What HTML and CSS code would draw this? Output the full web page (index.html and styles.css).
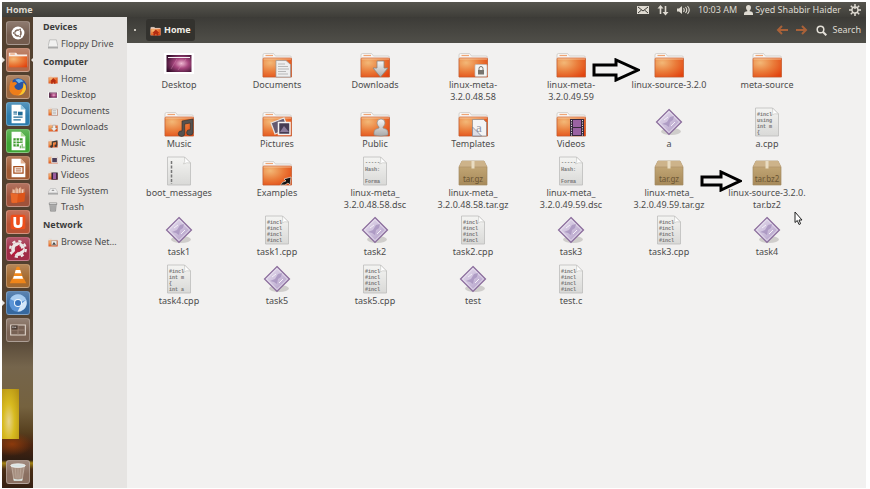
FILE: index.html
```html
<!DOCTYPE html>
<html lang="en">
<head>
<meta charset="utf-8">
<title>Home</title>
<link rel="stylesheet" href="styles.css">
</head>
<body>
<svg class="defs" width="0" height="0" aria-hidden="true">
  <defs>
    <linearGradient id="g-paper" x1="0" y1="0" x2="0" y2="1"><stop offset="0" stop-color="#f4f4f2"/><stop offset="1" stop-color="#d9d9d7"/></linearGradient>
    <radialGradient id="g-folder" cx=".25" cy=".25" r=".95"><stop offset="0" stop-color="#f3b877"/><stop offset=".5" stop-color="#ea7c3a"/><stop offset="1" stop-color="#e2430f"/></radialGradient>
    <linearGradient id="g-box" x1="0" y1="0" x2="0" y2="1"><stop offset="0" stop-color="#c9ad7c"/><stop offset="1" stop-color="#a78a5a"/></linearGradient>
    <linearGradient id="g-gem" x1="0" y1="0" x2="1" y2="1"><stop offset="0" stop-color="#e9e2ef"/><stop offset=".5" stop-color="#cdbfdc"/><stop offset="1" stop-color="#a892bf"/></linearGradient>
    <radialGradient id="g-desk" cx=".6" cy=".5" r=".7"><stop offset="0" stop-color="#f0b9d2"/><stop offset=".4" stop-color="#a8477f"/><stop offset="1" stop-color="#2f0a26"/></radialGradient>
    <linearGradient id="g-metal" x1="0" y1="0" x2="0" y2="1"><stop offset="0" stop-color="#f6f6f6"/><stop offset="1" stop-color="#aaa"/></linearGradient>
    <symbol id="folder" viewBox="0 0 32 30">
      <path d="M2 29V7q0-1.500 1.500-1.500h9l2 2.500H29q1.500 0 1.500 1.500V29z" fill="#f8f7f6" stroke="#c9c4bf" stroke-width=".7"/>
      <path d="M4.500 7.500h7.500" stroke="#efa473" stroke-width="1.200"/>
      <path d="M2 11q0-1 1-1h26.500q1 0 1 1v18H2z" fill="url(#g-folder)" stroke="#c85a2b" stroke-width=".7"/>
      <path d="M2.500 11h27.500" stroke="#f8cfa8" stroke-width=".8"/>
    </symbol>
    <symbol id="paper" viewBox="0 0 32 30">
      <path d="M4.500 1h17l6 6v22h-23z" fill="url(#g-paper)" stroke="#bdbdbb" stroke-width=".8"/>
      <path d="M21.500 1q1 5-1 7 3-2 7-1z" fill="#fff" stroke="#bdbdbb" stroke-width=".6"/>
    </symbol>
    <symbol id="gem" viewBox="0 0 32 30">
      <ellipse cx="18" cy="24.500" rx="10" ry="3.500" fill="#cfcdcb"/>
      <path d="M16 2.500 28.500 15 16 27.500 3.500 15z" fill="url(#g-gem)" stroke="#8a6c9b" stroke-width="1.200"/>
      <path d="M16 4.500 26.500 15 16 25.500 5.500 15z" fill="none" stroke="#eee8f2" stroke-width=".8"/>
      <path d="m9 17 5-2 3-5 4-1-1 4-3 2-1 5-3-2z" fill="#9a83b4" opacity=".6"/>
      <path d="m11 13 4-3M18 19l4-4" stroke="#f3eff7"/>
    </symbol>
    <symbol id="box" viewBox="0 0 32 30">
      <path d="M5 5h22l3 6v18H2V11z" fill="url(#g-box)" stroke="#a58b61" stroke-width=".7"/>
      <path d="M5 5h22l3 6H2z" fill="#cdb38a"/>
      <path d="M2 11h28" stroke="#b09467" stroke-width=".7"/>
      <path d="M14.500 5h3v7.500h-3z" fill="#e9dcc2"/>
    </symbol>
    <symbol id="desktop" viewBox="0 0 32 30">
      <path d="M1 5h30v21H1z" fill="#fff"/><path d="M3.500 7h25v17h-25z" fill="url(#g-desk)"/>
      <path d="M5 9.500h22" stroke="#f8edf3"/><path d="m8 21 6-10M15 22l8-11" stroke="#d995b8" stroke-width=".6" opacity=".6"/>
    </symbol>
    <symbol id="e-doc" viewBox="0 0 32 30"><path d="M15 12.500h10l4.500 4V29H15z" fill="#eee" stroke="#999" stroke-width=".7"/><path d="M17 16h7M17 18.500h10M17 21h11M17 23.500h8M17 26h10" stroke="#aaa" stroke-width=".8"/></symbol>
    <symbol id="e-down" viewBox="0 0 32 30"><path d="M18 13h7v7h4l-7.500 9L14 20h4z" fill="url(#g-metal)" stroke="#8c8680" stroke-width=".8"/></symbol>
    <symbol id="e-music" viewBox="0 0 32 30"><path d="m19 14 11-2v13.500a3.200 2.800 0 1 1-2.700-2.800V16l-5.600 1v9.700a3.200 2.800 0 1 1-2.700-2.800z" fill="#555250" stroke="#2f2d2b" stroke-width=".6"/></symbol>
    <symbol id="e-pics" viewBox="0 0 32 30"><path d="m10 16 13-5 4 11-13 5z" fill="#655b70" stroke="#e8e4e0" stroke-width="1.300"/><path d="M17.500 15.500h11.500v12H17.500z" fill="#463c53" stroke="#f5f3f1" stroke-width="1.500"/><path d="m19 25 4-6 5 6" fill="#8b7c9b"/></symbol>
    <symbol id="e-user" viewBox="0 0 32 30"><path d="M22 12q4 0 4 4 0 2-2 4v1q5 1 5 4v3q-7 2-14 0v-3q0-3 5-4v-1q-2-2-2-4 0-4 4-4z" fill="url(#g-metal)" stroke="#918c88" stroke-width=".7"/></symbol>
    <symbol id="e-lock" viewBox="0 0 32 30"><rect x="18" y="16.500" width="12" height="12" rx="1" fill="#f5f5f4" stroke="#bbb" stroke-width=".7"/><path d="M21 22h6v4.500h-6z" fill="#77746f"/><path d="M22 22v-1.500q0-2 2-2t2 2V22" fill="none" stroke="#77746f"/></symbol>
    <symbol id="e-tmpl" viewBox="0 0 32 30"><path d="M15.500 12.500h11l3 3V29h-14z" fill="#f4f4f5" stroke="#888" stroke-width=".7"/><text x="19" y="25" font-family="Liberation Serif,serif" font-size="13" fill="#8f91a0">a</text><path d="m15.500 20 9 9h-9z" fill="#dcdde5" stroke="#7b7c8c" stroke-width=".7"/></symbol>
    <symbol id="e-video" viewBox="0 0 32 30"><path d="M15 12h14v17H15z" fill="#38283d"/><path d="M18 13h8v7h-8zM18 21h8v7h-8z" fill="#9a62a3"/><path d="M16.500 13v16M27.500 13v16" stroke="#ddd" stroke-dasharray="1.200 1.200"/></symbol>
    <symbol id="e-link" viewBox="0 0 32 30"><path d="m30 21-1 8-2-2-3 2h-3l-2 1q2-5 6-5l-2-2z" fill="#111" stroke="#f4dfcf" stroke-width=".7"/></symbol>
  </defs>
</svg>

<div class="desktop">
  <header class="panel">
    <h1 class="panel-title">Home</h1>
    <div class="indicators">
      <svg width="12" height="10" viewBox="0 0 12 10"><path d="M0 1h12v8H0z" fill="#dfdbd2"/><path d="m1 2 5 4 5-4M1 8l3.500-3M11 8 7.500 5" fill="none" stroke="#3f3e39"/></svg>
      <svg width="12" height="12" viewBox="0 0 12 12"><path d="M3.500 10V3M8.500 2v7" stroke="#dfdbd2" stroke-width="1.600"/><path d="M.5 4.500 3.500 1l3 3.500zM5.500 8l3 3.500 3-3.500z" fill="#dfdbd2"/></svg>
      <svg width="13" height="10" viewBox="0 0 13 10"><path d="M0 3.500h2L5 1v8L2 6.500H0z" fill="#dfdbd2"/><path d="M6.500 3q1.500 2 0 4M8.500 2q2.500 3 0 6M10.500 1q3.500 4 0 8" fill="none" stroke="#dfdbd2" stroke-width="1.100"/></svg>
      <time>10:03 AM</time>
      <span class="user"><svg width="9" height="10" viewBox="0 0 9 10"><path d="M4.500 0q2.500 0 2.500 2.700Q7 4.500 5.700 5.500v.8Q9 6.500 9 9v1H0V9q0-2.500 3.300-2.700v-.8Q2 4.500 2 2.700 2 0 4.500 0z" fill="#dfdbd2"/></svg>Syed Shabbir Haider</span>
      <svg width="12" height="12" viewBox="0 0 12 12" fill="none" stroke="#dfdbd2"><circle cx="6" cy="6" r="3" stroke-width="1.300"/><path d="M6 0v5M6 9v3M0 6h3M9 6h3M1.800 1.800l2 2M8.200 8.200l2 2M10.200 1.800l-2 2M3.800 8.200l-2 2" stroke-width="1.500"/></svg>
    </div>
  </header>

  <div class="workspace">
    <nav class="launcher" aria-label="Launcher">
      <button class="tile t-dash" aria-label="Dash home"><svg viewBox="0 0 24 24"><circle cx="12" cy="12" r="7" fill="#fff"/><circle cx="12" cy="12" r="3.300" fill="none" stroke="#806a5e" stroke-width="1.700"/><path d="M10 12H6.500M13 10.300l1.700-3M13 13.700l1.700 3" stroke="#fff" stroke-width="1.200"/><circle cx="7.500" cy="12" r="1" fill="#806a5e"/><circle cx="14.300" cy="8.100" r="1" fill="#806a5e"/><circle cx="14.300" cy="15.900" r="1" fill="#806a5e"/></svg></button>
      <button class="tile t-files running focused" aria-label="Home folder"><svg viewBox="0 0 24 24"><path d="M2 19V4h8l1.500 2H22v13z" fill="#f7eee8"/><path d="M3.500 5.500h5" stroke="#e9884f"/><path d="M2 8h20v12H2z" fill="url(#g-folder)"/></svg></button>
      <button class="tile t-fox" aria-label="Firefox"><svg viewBox="0 0 24 24"><circle cx="12" cy="12" r="9.500" fill="#2855a5"/><path d="M9 4q6-2 9 2-3 0-5 2z" fill="#6fb5e8"/><path d="M3 8q1-3 3-4v3q3-1 5 1-1 2-3 3 1 5 6 4 4-1 5-7 3 4 1 8-3 6-9 5.500Q4 21 2.500 15 2 11 3 8z" fill="#ee7d1a"/><path d="M18 7q4 4 2 9-2 5-8 5 6-3 6-14z" fill="#fbc62d"/></svg></button>
      <button class="tile t-writer" aria-label="LibreOffice Writer"><svg viewBox="0 0 24 24"><path d="M5 2h10l5 5v15H5z" fill="#fff"/><path d="M15 2v5h5z" fill="#8fc5df"/><path d="M7 10h4M7 12h4M7 15.500h10M7 18.500h8" stroke="#216b96" stroke-width="1.300"/><path d="M12 9.500h5v4h-5z" fill="#216b96"/></svg></button>
      <button class="tile t-calc" aria-label="LibreOffice Calc"><svg viewBox="0 0 24 24"><path d="M5 2h10l5 5v15H5z" fill="#fff"/><path d="M15 2v5h5z" fill="#a9dd91"/><path d="M7 9h10v9H7z" fill="#3d9a2a"/><path d="M7 12h10M7 15h6M10 9v9M13.500 9v4" stroke="#fff"/><path d="M13 14h6v6h-6z" fill="#fff"/><path d="M14.500 20v-3M16.500 20v-5M18.500 20v-2" stroke="#3d9a2a"/></svg></button>
      <button class="tile t-impress" aria-label="LibreOffice Impress"><svg viewBox="0 0 24 24"><path d="M5 2h10l5 5v15H5z" fill="#fff"/><path d="M15 2v5h5z" fill="#e6b392"/><path d="M7.500 10.500h10v7h-10z" fill="none" stroke="#a8501f" stroke-width="1.400"/><path d="M9.500 13h6M9.500 15.200h6" stroke="#a8501f"/></svg></button>
      <button class="tile t-soft" aria-label="Software Center"><svg viewBox="0 0 24 24"><path d="m5 10 1-5 2 2 2-4 2 3 3-3 1 3 3-1v5z" fill="#d99a78"/><path d="M7.500 6v4M11 5v5M14 4.500v5M17 6v4" stroke="#f4dccd"/><path d="m4 10 8 1 8-2-1 10-12 2-2-1z" fill="#dd5519"/><path d="m4 10 8 1-1 9.500H5z" fill="#e8682a"/></svg></button>
      <button class="tile t-one" aria-label="Ubuntu One"><svg viewBox="0 0 24 24"><rect x="4" y="4" width="16" height="16" rx="2" fill="#ee4e1b"/><path d="M8.500 6.500v7q0 3.500 3.500 3.500t3.500-3.500v-7" fill="none" stroke="#fff" stroke-width="3"/></svg></button>
      <button class="tile t-set" aria-label="System Settings"><svg viewBox="0 0 24 24"><circle cx="12" cy="12" r="5.500" fill="none" stroke="#ece6e5" stroke-width="4"/><circle cx="12" cy="12" r="8.500" fill="none" stroke="#ece6e5" stroke-width="2.500" stroke-dasharray="3.400 3.300"/><path d="m4 19 7-7q-1-4 3-5l-1 3 2 2 3-1q-1 4-5 3l-7 7z" fill="#b41e3d"/></svg></button>
      <button class="tile t-vlc" aria-label="VLC"><svg viewBox="0 0 24 24"><path d="m3 20 3-6h12l3 6z" fill="#ef8519"/><path d="M10.500 2h3l4.500 14q-6 2.500-12 0z" fill="#f28a1c"/><path d="M9.500 5.500h5l1 3.500h-7zM7.500 12h9l1 3h-11z" fill="#fff"/></svg></button>
      <button class="tile t-chrome running" aria-label="Chromium"><svg viewBox="0 0 24 24"><circle cx="12" cy="12" r="9.500" fill="#5b94d6"/><path d="M12 12 3.500 7.500q3-5 8.500-5 6 0 9 6z" fill="#a9cdf0"/><path d="M21 8.500q2 7-3 10.500-3 2.500-6.500 2.500l4.500-9z" fill="#d4e6f8"/><circle cx="12" cy="12" r="4.400" fill="#eff6fd"/><circle cx="12" cy="12" r="3.300" fill="#3673bd"/></svg></button>
      <button class="tile t-term" aria-label="Workspace switcher"><svg viewBox="0 0 24 24"><path d="M4 6.500h16v11H4z" fill="#776154" stroke="#e0d5cc" stroke-width="1.200"/><path d="M12 7v10M5 12h14" stroke="#9c8779"/><path d="M5 7h6.500v4.500H5z" fill="#4a3b33"/><path d="M6.500 8v2M8 9h2" stroke="#fff" stroke-width=".8"/></svg></button>
      <button class="tile t-trash" aria-label="Trash"><svg viewBox="0 0 24 24"><path d="M5 5h14l-2.500 16h-9z" fill="#a68f80" stroke="#c8b8ab" stroke-width=".8"/><path d="m9 8 1 11M12 8v11M15 8l-1 11" stroke="#c0aea0" stroke-width=".7"/><ellipse cx="12" cy="5" rx="8" ry="2" fill="#d9e4e3" stroke="#fff" stroke-width=".7"/><path d="M7 19q5 2.500 10 0l-.5 2.500h-9z" fill="#dceae8"/></svg></button>
    </nav>

    <aside class="places">
      <h2>Devices</h2>
      <ul>
        <li><a href="#"><svg viewBox="0 0 12 12"><path d="M2 1h8l2 8v2H0V9z" fill="#f1f1f0" stroke="#999" stroke-width=".6"/><path d="M0 9h12v2H0z" fill="#aaa"/></svg>Floppy Drive</a></li>
      </ul>
      <h2>Computer</h2>
      <ul>
        <li><a href="#"><svg viewBox="0 0 32 30"><use href="#folder"/><path d="m7 22 10-10 10 10h-3v8h-5v-5h-4v5h-5v-8z" fill="#b22d12"/></svg>Home</a></li>
        <li><a href="#"><svg viewBox="0 0 32 30"><use href="#desktop"/></svg>Desktop</a></li>
        <li><a href="#"><svg viewBox="0 0 32 30"><use href="#folder"/><path d="M12 9h18v20H12z" fill="#f4f4f4" stroke="#777"/><path d="M15 14h11M15 19h11M15 24h11" stroke="#999" stroke-width="2"/></svg>Documents</a></li>
        <li><a href="#"><svg viewBox="0 0 32 30"><use href="#folder"/><path d="M15 9h9v9h6L19 29 9 18h6z" fill="#eee" stroke="#777"/></svg>Downloads</a></li>
        <li><a href="#"><svg viewBox="0 0 32 30"><use href="#folder"/><path d="M14 26V12l14-3v14" fill="none" stroke="#3c3836" stroke-width="4"/><circle cx="11" cy="26" r="4" fill="#3c3836"/><circle cx="25" cy="24" r="4" fill="#3c3836"/></svg>Music</a></li>
        <li><a href="#"><svg viewBox="0 0 32 30"><use href="#folder"/><path d="M12 10h18v17H12z" fill="#4b3f5a" stroke="#f0eeee" stroke-width="3"/></svg>Pictures</a></li>
        <li><a href="#"><svg viewBox="0 0 32 30"><use href="#folder"/><path d="M11 7h20v23H11z" fill="#33223a"/><path d="M16 9h10v19H16z" fill="#9a5c9f"/></svg>Videos</a></li>
        <li><a href="#"><svg viewBox="0 0 12 12"><path d="M3 3h6l3 5v2H0V8z" fill="#eee" stroke="#aaa" stroke-width=".6"/><path d="M0 8h12v2H0z" fill="#aaa"/><path d="m4 6 2-2 2 2z" fill="#999"/></svg>File System</a></li>
        <li><a href="#"><svg viewBox="0 0 12 12"><path d="M2 2h8l-1 9H3z" fill="#bbb" stroke="#777" stroke-width=".7"/><path d="M1.500 1h9v2h-9z" fill="#e8e8e8" stroke="#666" stroke-width=".6"/><path d="M4.500 4v6M6 4v6M7.500 4v6" stroke="#888" stroke-width=".6"/></svg>Trash</a></li>
      </ul>
      <h2>Network</h2>
      <ul>
        <li><a href="#"><svg viewBox="0 0 32 30"><use href="#folder"/><path d="M11 11h17v15H11z" fill="#eee" stroke="#777"/><path d="m13 24 6-9 7 9z" fill="#444"/></svg>Browse Net…</a></li>
      </ul>
    </aside>

    <section class="window">
      <div class="toolbar">
        <span class="crumb-prev"></span>
        <button class="crumb"><svg width="11" height="11" viewBox="0 0 32 30"><use href="#folder"/><path d="m7 22 10-10 10 10h-3v8h-5v-5h-4v5h-5v-8z" fill="#b22d12"/></svg>Home</button>
        <div class="tools">
          <button class="tool" aria-label="Back"><svg width="12" height="10" viewBox="0 0 12 10"><path d="M6 1 2 5l4 4M2 5h10" fill="none" stroke="#a96138" stroke-width="2"/></svg></button>
          <button class="tool" aria-label="Forward"><svg width="12" height="10" viewBox="0 0 12 10"><path d="m6 1 4 4-4 4M10 5H0" fill="none" stroke="#a96138" stroke-width="2"/></svg></button>
          <button class="tool search"><svg width="11" height="11" viewBox="0 0 11 11"><circle cx="4.500" cy="4.500" r="3.300" fill="none" stroke="#e4e0d8" stroke-width="1.500"/><path d="m7 7 3.300 3.300" stroke="#e4e0d8" stroke-width="2"/></svg>Search</button>
        </div>
      </div>

      <ul class="files">
        <li><a href="#"><svg><use href="#desktop"/></svg>Desktop</a></li>
        <li><a href="#"><svg><use href="#folder"/><use href="#e-doc"/></svg>Documents</a></li>
        <li><a href="#"><svg><use href="#folder"/><use href="#e-down"/></svg>Downloads</a></li>
        <li><a href="#"><svg><use href="#folder"/><use href="#e-lock"/></svg>linux-meta-<br>3.2.0.48.58</a></li>
        <li><a href="#"><svg><use href="#folder"/></svg>linux-meta-<br>3.2.0.49.59</a></li>
        <li><a href="#"><svg><use href="#folder"/></svg>linux-source-3.2.0</a>
          <svg class="pointer pointer-large" viewBox="0 0 48 24"><path d="M2 7h22V2l22 10-22 10v-5H2z"/></svg></li>
        <li><a href="#"><svg><use href="#folder"/></svg>meta-source</a></li>

        <li><a href="#"><svg><use href="#folder"/><use href="#e-music"/></svg>Music</a></li>
        <li><a href="#"><svg><use href="#folder"/><use href="#e-pics"/></svg>Pictures</a></li>
        <li><a href="#"><svg><use href="#folder"/><use href="#e-user"/></svg>Public</a></li>
        <li><a href="#"><svg><use href="#folder"/><use href="#e-tmpl"/></svg>Templates</a></li>
        <li><a href="#"><svg><use href="#folder"/><use href="#e-video"/></svg>Videos</a></li>
        <li><a href="#"><svg><use href="#gem"/></svg>a</a></li>
        <li><a href="#"><svg class="code"><use href="#paper"/><text x="6" y="9">#incl</text><text x="6" y="15">using</text><text x="6" y="21">int m</text><text x="6" y="27">{</text></svg>a.cpp</a></li>

        <li><a href="#"><svg><use href="#paper"/><path d="M8.500 5v23" stroke="#777" stroke-width="1.500" stroke-dasharray="3 1.500"/></svg>boot_messages</a></li>
        <li><a href="#"><svg><use href="#folder"/><use href="#e-link"/></svg>Examples</a></li>
        <li><a href="#"><svg class="code"><use href="#paper"/><text x="6" y="8">-----</text><text x="6" y="15">Hash:</text><text x="6" y="27">Forma</text></svg>linux-meta_<br>3.2.0.48.58.dsc</a></li>
        <li><a href="#"><svg class="arc"><use href="#box"/><text x="16" y="26">tar.gz</text></svg>linux-meta_<br>3.2.0.48.58.tar.gz</a></li>
        <li><a href="#"><svg class="code"><use href="#paper"/><text x="6" y="8">-----</text><text x="6" y="15">Hash:</text><text x="6" y="27">Forma</text></svg>linux-meta_<br>3.2.0.49.59.dsc</a></li>
        <li><a href="#"><svg class="arc"><use href="#box"/><text x="16" y="26">tar.gz</text></svg>linux-meta_<br>3.2.0.49.59.tar.gz</a></li>
        <li><a href="#"><svg class="arc"><use href="#box"/><text x="16" y="26">tar.bz2</text></svg>linux-source-3.2.0.<br>tar.bz2</a>
          <svg class="pointer pointer-small" viewBox="0 0 42 22"><path d="M2 7h19V2l19 9-19 9v-5H2z"/></svg>
          <svg class="cursor" viewBox="0 0 9 14"><path d="M1 1v10.500l2.300-2 1.700 4 1.600-.8L5 9h3z" fill="#fff" stroke="#222"/></svg></li>

        <li><a href="#"><svg><use href="#gem"/></svg>task1</a></li>
        <li><a href="#"><svg class="code"><use href="#paper"/><text x="6" y="9">#incl</text><text x="6" y="15">#incl</text><text x="6" y="21">#incl</text><text x="6" y="27">#incl</text></svg>task1.cpp</a></li>
        <li><a href="#"><svg><use href="#gem"/></svg>task2</a></li>
        <li><a href="#"><svg class="code"><use href="#paper"/><text x="6" y="9">#incl</text><text x="6" y="15">#incl</text><text x="6" y="21">#incl</text><text x="6" y="27">#incl</text></svg>task2.cpp</a></li>
        <li><a href="#"><svg><use href="#gem"/></svg>task3</a></li>
        <li><a href="#"><svg class="code"><use href="#paper"/><text x="6" y="9">#incl</text><text x="6" y="15">#incl</text><text x="6" y="21">#incl</text><text x="6" y="27">#incl</text></svg>task3.cpp</a></li>
        <li><a href="#"><svg><use href="#gem"/></svg>task4</a></li>

        <li><a href="#"><svg class="code"><use href="#paper"/><text x="6" y="9">#incl</text><text x="6" y="15">int m</text><text x="6" y="21">{</text><text x="6" y="27">int a</text></svg>task4.cpp</a></li>
        <li><a href="#"><svg><use href="#gem"/></svg>task5</a></li>
        <li><a href="#"><svg class="code"><use href="#paper"/><text x="6" y="9">#incl</text><text x="6" y="15">#incl</text><text x="6" y="21">#incl</text><text x="6" y="27">#incl</text></svg>task5.cpp</a></li>
        <li><a href="#"><svg><use href="#gem"/></svg>test</a></li>
        <li><a href="#"><svg class="code"><use href="#paper"/><text x="6" y="9">#incl</text><text x="6" y="15">#incl</text><text x="6" y="21">#incl</text><text x="6" y="27">#incl</text></svg>test.c</a></li>
      </ul>
    </section>
  </div>
</div>
</body>
</html>
```

FILE: styles.css
```css
* { box-sizing: border-box; }

body {
  margin: 0;
  background: #fff;
  color: #4c4c4c;
  font: 9px/12px "Noto Sans", "Open Sans", sans-serif;
}

ul { margin: 0; padding: 0; list-style: none; }
a { color: inherit; text-decoration: none; }
button { border: 0; padding: 0; background: none; color: inherit; font: inherit; }
svg { display: block; flex: none; }
.defs { position: absolute; }

.desktop {
  display: flex;
  flex-direction: column;
  min-height: 100vh;
  padding: 2px 4px 1px 2px;
}

/* Top panel */
.panel {
  display: flex;
  align-items: center;
  justify-content: space-between;
  height: 15px;
  padding: 0 5px 0 4px;
  background: linear-gradient(#56554e, #3f3e39);
  color: #dfdbd2;
}
.panel-title { margin: 0; font-size: 9px; line-height: 12px; }
.indicators { display: flex; align-items: center; gap: 8px; }
.indicators time { margin-right: -1px; }
.user { display: flex; align-items: center; gap: 2px; }

.workspace { display: flex; flex: 1; }

/* Launcher, with the wallpaper showing through its lower end */
.launcher {
  display: flex;
  flex-direction: column;
  align-items: center;
  gap: 3px;
  width: 31px;
  padding: 4px 0 4px;
  background:
    radial-gradient(ellipse at 40% 65%, #e6d38a 0, #d8bb20 40%, #b08c12 100%) 0 372px / 17px 50px no-repeat,
    radial-gradient(ellipse 20px 12px at 10px 427px, #8c3a0c, #8c3a0c00),
    linear-gradient(#52402f 0 290px, #5a4b3a 325px, #75654c 350px, #75623f 390px, #57401f 415px, #4a2410 428px, #2e1d12 443px, #a48414 446px, #4a2e15 452px, #352013);
}
.tile {
  position: relative;
  width: 24px;
  height: 24px;
  border: 1px solid #ffffff40;
  border-radius: 3px;
  background-image: linear-gradient(#ffffff30, #ffffff00 60%);
}
.tile svg { width: 22px; height: 22px; }
.t-dash { background-color: #745c4e; }
.t-files { background-color: #b0694a; }
.t-fox { background-color: #9c6840; }
.t-writer { background-color: #2d7cad; }
.t-calc { background-color: #3ea534; }
.t-impress { background-color: #a05a32; }
.t-soft { background-color: #a0523a; }
.t-one { background-color: #b85234; }
.t-set { background-color: #a02c46; }
.t-vlc { background-color: #a46a30; }
.t-chrome { background-color: #36689f; }
.t-term { background-color: #7a6354; }
.t-trash { margin-top: auto; background-color: #8a6f60; }

.running::before,
.focused::after {
  content: "";
  position: absolute;
  top: 8px;
  border: 3px solid transparent;
}
.running::before { left: -5px; border-left-color: #e8e4e0; }
.focused::after { right: -5px; border-right-color: #e8e4e0; }

/* Places sidebar */
.places {
  width: 94px;
  padding: 0 0 0 10px;
  background: #e6e4e2;
  white-space: nowrap;
}
.places h2 { margin: 0; font-size: 9px; line-height: 19px; color: #3c3c3c; }
.places a { display: flex; align-items: center; gap: 3px; height: 16px; padding-left: 5px; }
.places svg { width: 10px; height: 10px; }

/* File window */
.window { flex: 1; min-width: 0; background: #f2f1f0; }
.toolbar {
  display: flex;
  align-items: center;
  height: 26px;
  padding: 0 5px 0 7px;
  background: linear-gradient(#3c3b37, #504f49);
  color: #dfdbd2;
}
.crumb-prev { width: 2px; height: 2px; margin-right: 10px; background: #c8c4bb; }
.crumb {
  display: flex;
  align-items: center;
  gap: 3px;
  height: 22px;
  padding: 0 4px;
  border-radius: 3px;
  background: #33322e;
  color: #f0ede6;
  font-weight: 700;
}
.tools { display: flex; align-items: center; gap: 8px; margin-left: auto; }
.search { display: flex; align-items: center; gap: 6px; }

.files {
  display: grid;
  grid-template-columns: repeat(auto-fill, 98px);
  row-gap: 4px;
  padding: 5px 3px;
}
.files li { position: relative; min-height: 45px; text-align: center; }
.files a { display: block; }
.files a svg { width: 32px; height: 30px; margin: 0 auto 1px; }
.code text { font: 700 5px "Liberation Mono", monospace; fill: #777; }
.arc text { font: 8px "Noto Sans", sans-serif; fill: #6b5533; text-anchor: middle; }

/* Annotations laid over the files */
.pointer { position: absolute; fill: #f2f1f0; stroke: #000; stroke-width: 3; }
.pointer-large { top: 10px; left: -28px; width: 48px; height: 24px; }
.pointer-small { top: 14px; left: -18px; width: 42px; height: 22px; }
.cursor { position: absolute; top: 55px; left: 76px; width: 9px; height: 14px; }
```
